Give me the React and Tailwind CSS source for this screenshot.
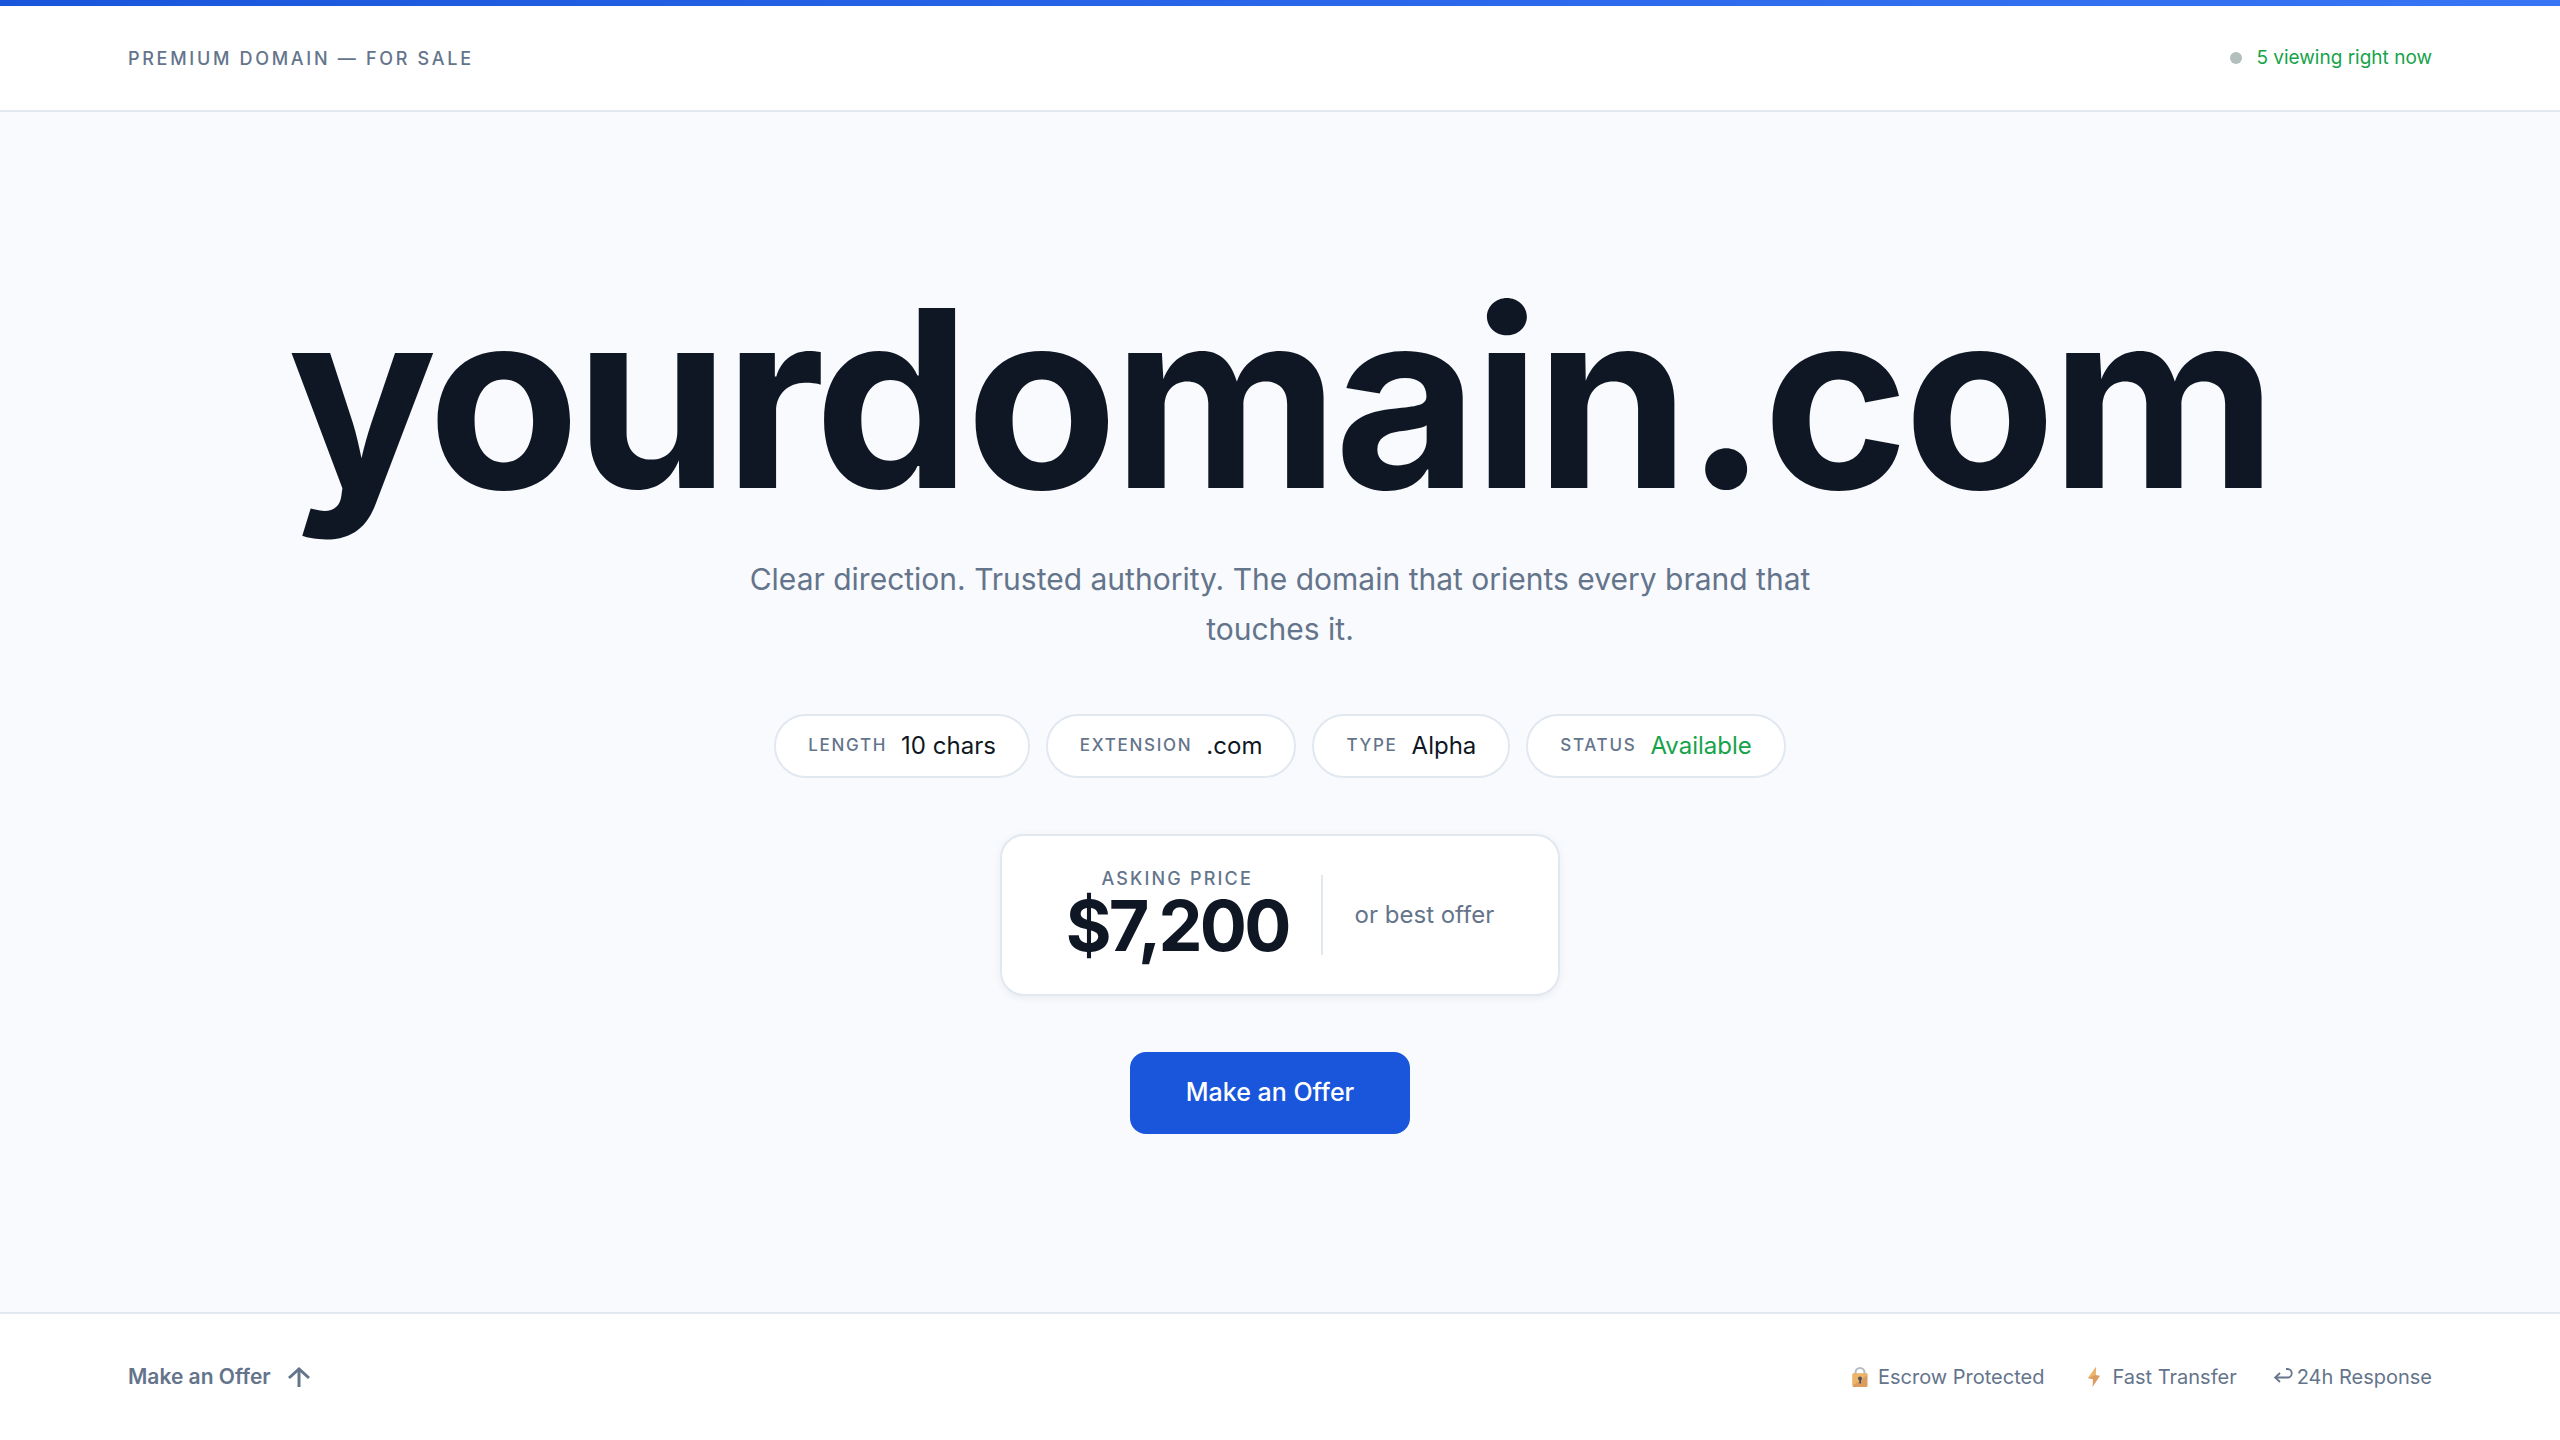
import { useState } from 'react';

const details = [
    { label: 'Length', value: '10 chars' },
    { label: 'Extension', value: '.com' },
    { label: 'Type', value: 'Alpha' },
    { label: 'Status', value: 'Available', available: true },
];

const LockIcon = () => (
    <svg width="28" height="24" viewBox="0 0 28 24" fill="none" aria-hidden="true">
        <path d="M9.5 10V7.5a4.5 4.5 0 0 1 9 0V10" stroke="#b4bcc4" strokeWidth="2" />
        <rect x="6.5" y="8.5" width="15" height="13.5" rx="1" fill="#dc9c60" />
        <path d="M6.5 9.500a1 1 0 0 1 1-1h13a1 1 0 0 1 1 1V10L7.500 20h-1z" fill="#ecb568" />
        <circle cx="14" cy="13.500" r="2" fill="#4a4f5c" />
        <path d="M13.300 14h1.700v4.500h-1.700z" fill="#4a4f5c" />
    </svg>
);

const BoltIcon = () => (
    <svg width="28" height="24" viewBox="0 0 28 24" fill="none" aria-hidden="true">
        <path d="M16 2 8 13.300l5 .9L12.500 22 20 10.800l-4.500-.9z" fill="#dc9c60" />
        <path d="M16 2 8 13.300l7.500-3.400z" fill="#ecb568" />
    </svg>
);

const ReturnIcon = () => (
    <svg width="20" height="24" viewBox="0 0 20 24" fill="none" stroke="currentColor" strokeWidth="1.800" aria-hidden="true">
        <path d="M13 4h1.500a4 4 0 0 1 0 8.500H2.500" />
        <path d="M7 8 2.200 12.500 7 17" />
    </svg>
);

const ArrowUpIcon = () => (
    <svg width="24" height="24" viewBox="0 0 24 24" fill="none" stroke="currentColor" strokeWidth="3" aria-hidden="true">
        <path d="M12 22V3.500" />
        <path d="M2 13 12 4l10 9" />
    </svg>
);

const App = () => {
    const [viewers] = useState(5);

    return (
        <div className="flex min-h-screen flex-col bg-[#f8fafd] font-['Inter',sans-serif] text-[#0f1724]">
            <div className="h-1.5 bg-linear-to-r from-[#1a56db] to-[#3875f6]" />

            <header className="flex h-[106px] items-center justify-between border-b-2 border-[#e2e8f0] bg-white px-[5%]">
                <p className="text-[18px] font-medium uppercase tracking-[0.15em] text-[#64748b]">
                    Premium Domain — For Sale
                </p>
                <p className="flex items-center gap-3.5 text-[19px] text-[#16a34a]">
                    <span className="size-3 rounded-full bg-[#b3bfbc]" />
                    {viewers} viewing right now
                </p>
            </header>

            <main className="flex flex-1 flex-col items-center justify-center gap-14 text-center">
                <div className="flex flex-col items-center gap-12 pb-1">
                    <h1 className="text-[248px] leading-[216px] font-bold tracking-[-0.02em]">
                        yourdomain.com
                    </h1>
                    <p className="max-w-[1080px] text-[30px] leading-[50px] text-[#64748b]">
                        Clear direction. Trusted authority. The domain that orients every brand that touches it.
                    </p>
                </div>

                <dl className="flex flex-wrap justify-center gap-4">
                    {details.map((detail) => (
                        <div
                            key={detail.label}
                            className="flex h-16 items-center gap-3.5 rounded-full border-2 border-[#e2e8f0] bg-white px-8"
                        >
                            <dt className="text-[17px] font-medium uppercase tracking-[0.1em] text-[#64748b]">
                                {detail.label}
                            </dt>
                            <dd className={detail.available ? 'text-[24px] text-[#16a34a]' : 'text-[24px]'}>
                                {detail.value}
                            </dd>
                        </div>
                    ))}
                </dl>

                <section className="flex items-center gap-8 rounded-3xl border-2 border-[#e2e8f0] bg-white px-16 py-8 shadow-[0_2px_8px_rgba(15,23,42,0.06)]">
                    <div>
                        <p className="text-[18px] leading-[22px] font-medium uppercase tracking-[0.12em] text-[#64748b]">
                            Asking Price
                        </p>
                        <p className="text-[70px] leading-[72px] font-bold tracking-[-0.04em]">$7,200</p>
                    </div>
                    <div className="h-20 w-0.5 bg-[#e2e8f0]" />
                    <p className="text-[24px] text-[#64748b]">or best offer</p>
                </section>

                <div className="pr-5">
                    <button
                        type="button"
                        className="h-[82px] rounded-2xl bg-[#1a56db] px-14 text-[25px] font-medium text-white hover:bg-[#1e4fc0]"
                    >
                        Make an Offer
                    </button>
                </div>
            </main>

            <footer className="flex h-32 items-center justify-between border-t-2 border-[#e2e8f0] bg-white px-[5%] text-[20px] text-[#64748b]">
                <a href="#offer" className="flex items-center gap-4 text-[21px] font-semibold">
                    Make an Offer
                    <ArrowUpIcon />
                </a>
                <ul className="flex items-center gap-9">
                    <li className="flex items-center gap-1">
                        <LockIcon />
                        Escrow Protected
                    </li>
                    <li className="flex items-center gap-1">
                        <BoltIcon />
                        Fast Transfer
                    </li>
                    <li className="flex items-center gap-1">
                        <ReturnIcon />
                        24h Response
                    </li>
                </ul>
            </footer>
        </div>
    );
};

export default App;
